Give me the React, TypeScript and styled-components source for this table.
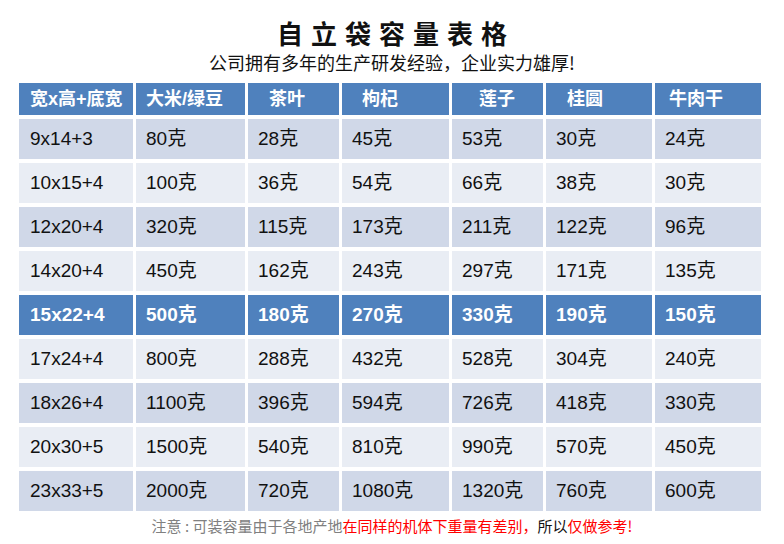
import { createGlobalStyle, styled } from 'styled-components';

const GlobalStyle = createGlobalStyle`
  body {
    margin: 0;
    background: #ffffff;
    font-family: 'Liberation Sans', 'Noto Sans CJK SC', sans-serif;
  }
`;

const Page = styled.div`
  width: 784px;
  height: 544px;
  padding-top: 17px;
  box-sizing: border-box;
  display: flex;
  flex-direction: column;
  align-items: center;
`;

const Title = styled.h1`
  margin: 0;
  font-family: 'Noto Sans CJK SC', sans-serif;
  font-size: 26px;
  font-weight: 700;
  line-height: 32px;
  letter-spacing: 8px;
  padding-left: 8px;
  color: #111111;
`;

const Subtitle = styled.p`
  margin: 2px 0 0;
  font-family: 'Noto Sans CJK SC', sans-serif;
  font-size: 18px;
  line-height: 22px;
  color: #111111;
`;

const Table = styled.div`
  margin-top: 10px;
  align-self: flex-start;
  margin-left: 19px;
  display: grid;
  grid-template-columns: 114px 109px 91px 107px 91px 106px 106px;
  grid-template-rows: 32px repeat(9, 40px);
  column-gap: 3px;
  row-gap: 4px;
`;

const Cell = styled.div<{ $tone: 'head' | 'odd' | 'even' | 'hot'; $indent?: number }>`
  display: flex;
  align-items: center;
  padding-left: ${(p) => p.$indent ?? 10}px;
  font-size: ${(p) => (p.$tone === 'head' ? 18 : 19)}px;
  line-height: 24px;
  font-weight: ${(p) => (p.$tone === 'head' || p.$tone === 'hot' ? 700 : 400)};
  color: ${(p) => (p.$tone === 'head' || p.$tone === 'hot' ? '#ffffff' : '#111111')};
  background: ${(p) =>
    p.$tone === 'odd' ? '#d0d8e8' : p.$tone === 'even' ? '#e9edf4' : '#4f81bd'};
  white-space: nowrap;
`;

const CellText = styled.span`
  display: block;
  height: 24px;
  line-height: 24px;
`;

const Note = styled.p`
  margin: 5px 0 0;
  font-family: 'Noto Sans CJK SC', sans-serif;
  font-size: 15px;
  line-height: 20px;
  color: #808080;
`;

const Red = styled.span`
  color: #ff0000;
`;

const Dark = styled.span`
  color: #111111;
`;

const headers = ['宽x高+底宽', '大米/绿豆', '茶叶', '枸杞', '莲子', '桂圆', '牛肉干'];
const headIndent = [11, 10, 21, 20, 27, 21, 14];

const rows = [
  ['9x14+3', '80克', '28克', '45克', '53克', '30克', '24克'],
  ['10x15+4', '100克', '36克', '54克', '66克', '38克', '30克'],
  ['12x20+4', '320克', '115克', '173克', '211克', '122克', '96克'],
  ['14x20+4', '450克', '162克', '243克', '297克', '171克', '135克'],
  ['15x22+4', '500克', '180克', '270克', '330克', '190克', '150克'],
  ['17x24+4', '800克', '288克', '432克', '528克', '304克', '240克'],
  ['18x26+4', '1100克', '396克', '594克', '726克', '418克', '330克'],
  ['20x30+5', '1500克', '540克', '810克', '990克', '570克', '450克'],
  ['23x33+5', '2000克', '720克', '1080克', '1320克', '760克', '600克'],
];

const App = () => {
  return (
    <Page>
      <GlobalStyle />
      <Title>自立袋容量表格</Title>
      <Subtitle>公司拥有多年的生产研发经验，企业实力雄厚!</Subtitle>
      <Table>
        {headers.map((h, i) => (
          <Cell key={h} $tone="head" $indent={headIndent[i]}>
            <CellText>{h}</CellText>
          </Cell>
        ))}
        {rows.map((row, r) => {
          const tone = r === 4 ? 'hot' : r % 2 === 0 ? 'odd' : 'even';
          return row.map((value, c) => (
            <Cell key={`${r}-${c}`} $tone={tone} $indent={c === 0 ? 11 : 10}>
              <CellText>{value}</CellText>
            </Cell>
          ));
        })}
      </Table>
      <Note>
        注意 : 可装容量由于各地产地<Red>在同样的机体下重量有差别，</Red>
        <Dark>所以</Dark>
        <Red>仅做参考!</Red>
      </Note>
    </Page>
  );
};

export default App;
